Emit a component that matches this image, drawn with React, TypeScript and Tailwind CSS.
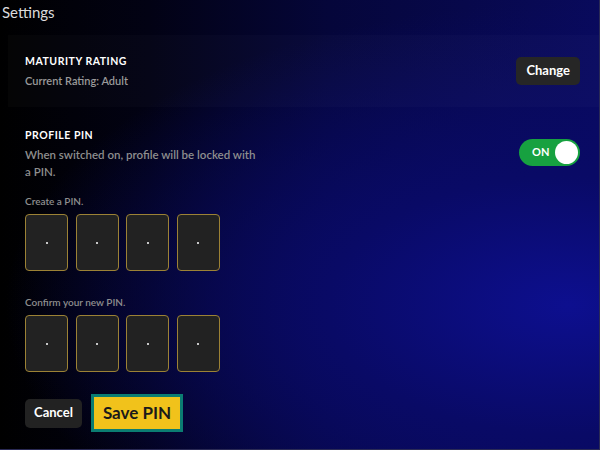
import React, { useState } from "react";

const font = { fontFamily: "Lato, 'Noto Sans', Arial, sans-serif" };

const PinRow: React.FC = () => (
  <div className="flex gap-[7.5px]">
    {[0, 1, 2, 3].map((i) => (
      <div
        key={i}
        className="w-[43px] h-[57px] rounded-[4px] border border-[#9c8235] bg-[#222222] flex items-center justify-center"
      >
        <span className="w-[2px] h-[2px] rounded-full bg-white" />
      </div>
    ))}
  </div>
);

const App: React.FC = () => {
  const [pinOn, setPinOn] = useState(true);

  return (
    <div
      style={font}
      className="w-[600px] h-[450px] overflow-hidden bg-[radial-gradient(ellipse_at_95%_68%,#0d0f8f_0%,#090a66_30%,transparent_70%),linear-gradient(to_right,#000000_0%,#020214_25%,#05063a_55%,#090a5c_100%)] border-r border-b border-[#2a2a55]"
    >
      <h1 className="px-[2px] pt-[1px] text-[15px] leading-[22px] text-[#dcdcdc]">Settings</h1>

      <section className="mt-[12px] ml-[8px] h-[72px] bg-white/[0.02] flex items-center justify-between pl-[17px] pr-[19px]">
        <div>
          <h2 className="text-[10.5px] font-bold tracking-[0.05em] text-white leading-[14px]">MATURITY RATING</h2>
          <p className="mt-[6px] text-[11px] font-semibold text-[#9a9a9a] leading-[14px]">Current Rating: Adult</p>
        </div>
        <button className="h-[28px] px-[10px] rounded-[5px] bg-[#262626] text-white text-[13px] font-bold">
          Change
        </button>
      </section>

      <section className="mt-[3px] ml-[8px] pl-[17px] pr-[19px] pt-[18px]">
        <div className="flex justify-between">
          <div>
            <h2 className="text-[10.5px] font-bold tracking-[0.05em] text-white leading-[14px]">PROFILE PIN</h2>
            <p className="mt-[4px] w-[232px] text-[11.5px] font-semibold text-[#8e8e8e] leading-[17px]">
              When switched on, profile will be locked with a PIN.
            </p>
          </div>
          <button
            onClick={() => setPinOn(!pinOn)}
            className="mt-[11px] w-[61px] h-[27px] rounded-full bg-[#17a140] flex items-center justify-between pl-[13px] pr-[2px]"
          >
            <span className="text-[11px] font-bold text-white">{pinOn ? "ON" : "OFF"}</span>
            <span className="w-[23px] h-[23px] rounded-full bg-white" />
          </button>
        </div>

        <p className="mt-[15px] text-[10px] font-semibold text-[#8e8e8e] leading-[13px]">Create a PIN.</p>
        <div className="mt-[6px]">
          <PinRow />
        </div>

        <p className="mt-[25px] text-[10px] font-semibold text-[#8e8e8e] leading-[13px]">Confirm your new PIN.</p>
        <div className="mt-[6px]">
          <PinRow />
        </div>

        <div className="mt-[22px] flex items-center gap-[9px]">
          <button className="w-[57px] h-[29px] rounded-[5px] bg-[#222222] text-white text-[13px] font-bold">
            Cancel
          </button>
          <button className="w-[92px] h-[38px] border-[3px] border-[#0b7d72] bg-[#f1c21b] text-[#1a1a1a] text-[17px] font-bold">
            Save PIN
          </button>
        </div>
      </section>
    </div>
  );
};

export default App;
